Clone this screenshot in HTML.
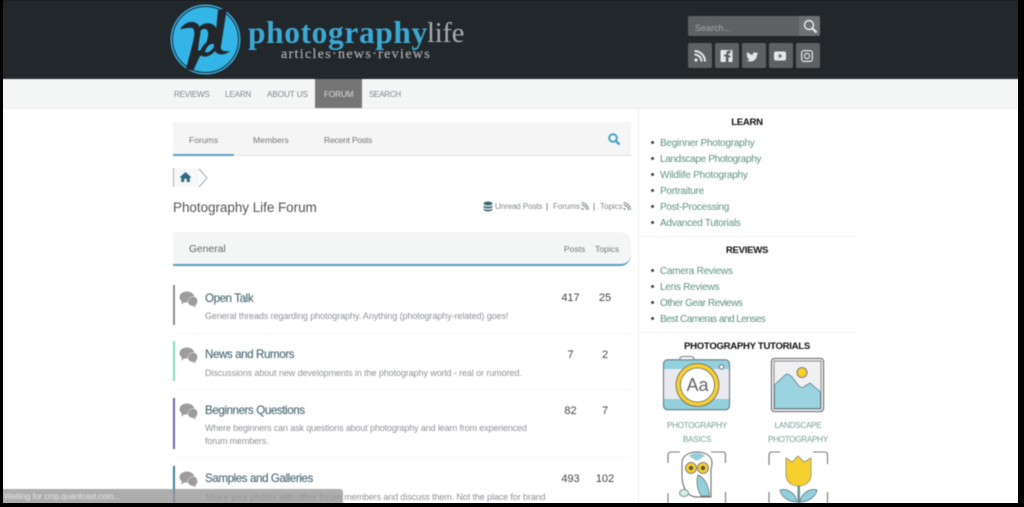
<!DOCTYPE html>
<html><head><meta charset="utf-8"><title>Photography Life Forum</title>
<style>
html,body{margin:0;padding:0;width:1024px;height:507px;overflow:hidden;background:#000}
#p{position:absolute;left:0;top:0;width:1024px;height:507px;overflow:hidden;background:#fff;font-family:"Liberation Sans",sans-serif;filter:blur(.4px)}
#p div,#p svg{position:absolute;white-space:nowrap}
.fr{position:absolute;background:#000}
.nav{font-size:8.2px;color:#84898c;top:89px;line-height:12px;letter-spacing:-.1px}
.tab{font-size:8.6px;color:#777;top:134px;line-height:12px}
.sh{font-size:9.6px;font-weight:bold;color:#111;line-height:14px;text-align:center;letter-spacing:-.3px}
.li{font-size:10px;color:#5f9186;left:660px;line-height:14px;letter-spacing:-.25px}
.bu{width:3px;height:3px;border-radius:50%;background:#444;left:651px}
.ft{font-size:11.6px;color:#4f6d78;left:205px;line-height:15px;letter-spacing:-.42px;-webkit-text-stroke:.15px #4f6d78}
.fd{font-size:9px;color:#8c9295;left:205px;line-height:12.5px;letter-spacing:-.09px}
.n{font-size:11px;color:#444;line-height:14px;text-align:center}
.bar{left:173px;width:2px}
.cap{font-size:8px;color:#6f9d98;line-height:13.5px;text-align:center;letter-spacing:-.18px}
.sq{top:43px;width:24px;height:25px;background:#5e6163;border-radius:2px}
.ur{top:201px;font-size:8px;line-height:12px;color:#7d8a90}
</style></head><body><div id="p">

<div style="left:0;top:0;width:1024px;height:79px;background:#22272b"></div>
<div style="left:0;top:79px;width:1024px;height:30px;background:#f4f5f5;border-bottom:1px solid #ececec;box-sizing:border-box"></div>

<!-- logo -->
<svg style="left:168px;top:2px" width="76" height="76" viewBox="0 0 76 76">
<circle cx="37.500" cy="37.500" r="35" fill="#33b5e8"/>
<circle cx="37.500" cy="37.500" r="33" fill="none" stroke="#22272b" stroke-width="1"/>
<path d="M12 27C16 21 23 18 28 21C30 22 31 23 31 25C37 19 48 20 49 29C50 40 42 52 32 54L25 69L18 67L25 40C27 32 27 27 24 26C20 25 16 27 12 27Z" fill="#22272b"/>
<path d="M33 28C38 25 41 28 40 34C39 41 36 47 30 49L31 40Z" fill="#33b5e8"/>
<path d="M50 8L59 6L53 44C52 48 55 50 62 49C58 53 50 54 47 49C44 53 38 56 34 54C31 52 33 44 38 41C42 38 46 38 47 40Z" fill="#22272b"/>
<path d="M46 42C42 41 38 45 37 50C40 52 44 48 46 45Z" fill="#33b5e8"/>
</svg>
<div style="left:248px;top:13px;font:bold 31.500px/40px 'Liberation Serif',serif;color:#3ba9d3;letter-spacing:.6px">photography</div>
<div style="left:427px;top:14px;font:28.500px/40px 'Liberation Serif',serif;color:#a9adaf;letter-spacing:-.2px">life</div>
<div style="left:281px;top:46px;font:14px/18px 'Liberation Serif',serif;color:#a8acae;letter-spacing:1.330px;-webkit-text-stroke:.2px #a8acae">articles·news·reviews</div>

<!-- nav -->
<div style="left:315px;top:79px;width:47px;height:29px;background:#757575"></div>
<div class="nav" style="left:174px;letter-spacing:-.35px">REVIEWS</div>
<div class="nav" style="left:225px;letter-spacing:-.25px">LEARN</div>
<div class="nav" style="left:267px">ABOUT US</div>
<div class="nav" style="left:324px;color:#ddd">FORUM</div>
<div class="nav" style="left:369px;letter-spacing:-.4px">SEARCH</div>

<!-- search -->
<div style="left:688px;top:16px;width:132px;height:20px;background:#5e6163;border-radius:2px"></div>
<div style="left:799px;top:16px;width:21px;height:20px;background:#6e7173;border-radius:0 2px 2px 0"></div>
<div style="left:695px;top:22px;font-size:9px;line-height:12px;color:#a5a8a9">Search...</div>
<svg style="left:801px;top:17px" width="18" height="18" viewBox="0 0 18 18"><circle cx="8" cy="8" r="4.500" fill="none" stroke="#eee" stroke-width="1.400"/><path d="M11.500 11.500L15.500 15.500" stroke="#eee" stroke-width="2.200"/></svg>

<div class="sq" style="left:688px"></div><div class="sq" style="left:715px"></div><div class="sq" style="left:742px"></div><div class="sq" style="left:769px"></div><div class="sq" style="left:796px"></div>
<svg style="left:688px;top:43px" width="132" height="25" viewBox="0 0 132 25">
<g fill="#e8e8e8">
<circle cx="8" cy="17" r="1.600"/>
<path d="M6.500 10.500a8 8 0 0 1 8 8h-2a6 6 0 0 0-6-6zM6.500 7a11.500 11.500 0 0 1 11.500 11.500h-2a9.500 9.500 0 0 0-9.500-9.500z"/>
<path d="M33.500 7h10a1 1 0 0 1 1 1v10a1 1 0 0 1-1 1h-3v-4.500h1.700l.3-2h-2v-1.200c0-.6.2-1 1-1h1.100V7.600h-1.600c-1.700 0-2.700 1-2.700 2.700v1.200H36v2h1.800V19h-4.300a1 1 0 0 1-1-1V8a1 1 0 0 1 1-1z"/>
<path d="M60 9.500c1.600 1.600 3.200 2.400 4.800 2.500-.4-2 2-3.400 3.500-2 .6 0 1.100-.3 1.600-.5-.2.600-.6 1-1 1.300.5 0 .9-.2 1.300-.3-.3.500-.7.900-1.200 1.200 0 3.700-2.800 6.800-6.800 6.800-1.400 0-2.600-.4-3.700-1.100 1.300.1 2.400-.2 3.400-.9-1.100 0-1.900-.7-2.300-1.600.4.1.7 0 1 0-1.100-.3-1.900-1.200-1.900-2.400.3.200.7.300 1.100.3-1-.7-1.400-2.200-.8-3.300z"/>
<path d="M88 8.500h8a2 2 0 0 1 2 2v5a2 2 0 0 1-2 2h-8a2 2 0 0 1-2-2v-5a2 2 0 0 1 2-2z"/>
</g>
<path d="M90.800 10.800v4.400l3.600-2.200z" fill="#5e6163"/>
<g fill="none" stroke="#e8e8e8" stroke-width="1.200"><rect x="113.600" y="7.600" width="10.800" height="10.800" rx="2.600"/><circle cx="119" cy="13" r="2.600"/></g>
</svg>

<!-- tabs -->
<div style="left:173px;top:122px;width:458px;height:33px;background:#f5f5f5;border-bottom:1px solid #e3e3e3"></div>
<div style="left:173px;top:154px;width:61px;height:2px;background:#5b9fc2"></div>
<div class="tab" style="left:189px">Forums</div>
<div class="tab" style="left:253px">Members</div>
<div class="tab" style="left:324px;letter-spacing:-.25px">Recent Posts</div>
<svg style="left:607px;top:132px" width="14" height="14" viewBox="0 0 14 14"><circle cx="6" cy="6" r="3.800" fill="none" stroke="#45a3c4" stroke-width="2"/><path d="M9 9L12.500 12.500" stroke="#45a3c4" stroke-width="2.400"/></svg>

<!-- breadcrumb -->
<div style="left:173px;top:168px;width:1px;height:19px;background:#a9b3b8"></div>
<div style="left:174px;top:168px;width:25px;height:19px;background:#f5f7f8"></div>
<svg style="left:179px;top:171px" width="13" height="12" viewBox="0 0 13 12"><path d="M6.500 1L12.500 6.500H10.800V11H7.800V7.800H5.200V11H2.200V6.500H.5Z" fill="#2f6a7d"/></svg>
<svg style="left:197px;top:168px" width="12" height="20" viewBox="0 0 12 20"><path d="M2 1L10 10L2 19" fill="none" stroke="#9eabb1" stroke-width="1"/></svg>

<div style="left:173px;top:199px;font-size:13.500px;line-height:17px;color:#555;letter-spacing:-.05px">Photography Life Forum</div>

<svg style="left:483px;top:201px" width="10" height="11" viewBox="0 0 10 11"><g fill="#3f6874"><ellipse cx="5" cy="2.500" rx="4.500" ry="2"/><path d="M.5 4.500c1 1.500 8 1.500 9 0v1.500c-1 2-8 2-9 0zM.5 7.500c1 1.500 8 1.500 9 0v1c-1 2.500-8 2.500-9 0z"/></g></svg>
<div class="ur" style="left:495px;letter-spacing:-.1px">Unread Posts</div>
<div class="ur" style="left:546px;color:#555">|</div>
<div class="ur" style="left:553px">Forums</div>
<div class="ur" style="left:593px;color:#555">|</div>
<div class="ur" style="left:600px">Topics</div>
<svg style="left:581px;top:202px" width="8" height="9" viewBox="0 0 8 9"><path d="M.5 3a5 5 0 0 1 5 5M.5.800a7.200 7.200 0 0 1 7 7.200" fill="none" stroke="#73838a" stroke-width="1"/><circle cx="1.500" cy="7" r="1" fill="#73838a"/></svg>
<svg style="left:623px;top:202px" width="8" height="9" viewBox="0 0 8 9"><path d="M.5 3a5 5 0 0 1 5 5M.5.800a7.200 7.200 0 0 1 7 7.200" fill="none" stroke="#73838a" stroke-width="1"/><circle cx="1.500" cy="7" r="1" fill="#73838a"/></svg>

<!-- General -->
<div style="left:173px;top:232px;width:458px;height:32px;background:#f4f5f5;border-bottom:2px solid #5b9fc2;border-radius:0 10px 10px 0/0 10px 12px 0"></div>
<div style="left:189px;top:243px;font-size:10.300px;line-height:14px;color:#666">General</div>
<div style="left:564px;top:243px;font-size:8.500px;line-height:12px;color:#777">Posts</div>
<div style="left:595px;top:243px;font-size:8.500px;line-height:12px;color:#777">Topics</div>

<!-- rows -->
<div class="bar" style="top:285px;height:40px;background:#8f8f8f"></div>
<div class="bar" style="top:341px;height:40px;background:#7fdcc4"></div>
<div class="bar" style="top:398px;height:51px;background:#6a6aa6"></div>
<div class="bar" style="top:466px;height:37px;background:#3f7f99"></div>
<div style="left:173px;top:333px;width:458px;height:1px;background:#f7f7f7"></div>
<div style="left:173px;top:389px;width:458px;height:1px;background:#f7f7f7"></div>
<div style="left:173px;top:457px;width:458px;height:1px;background:#f7f7f7"></div>

<svg width="0" height="0" style="left:0;top:0"><defs><g id="b"><path d="M8 .5C3.800.5.500 3 .5 6.200c0 1.700 1 3.200 2.500 4.200L2 13.500l3.700-2.100c.7.1 1.500.2 2.300.2 4.200 0 7.500-2.400 7.500-5.400S12.200.5 8 .5z" fill="#9c9c9c"/><path d="M14.500 5.500c-3 0-5.800 2.200-5.800 5 0 2.600 2.400 4.600 5.300 4.600l3 1.700-.5-2.600c1.300-.8 2.100-2.200 2.100-3.700 0-2.800-1.600-5-4.100-5z" fill="#9c9c9c" stroke="#fff" stroke-width=".5"/></g></defs></svg>
<svg style="left:179px;top:291px" width="21" height="18"><use href="#b"/></svg>
<svg style="left:179px;top:347px" width="21" height="18"><use href="#b"/></svg>
<svg style="left:179px;top:403px" width="21" height="18"><use href="#b"/></svg>
<svg style="left:179px;top:471px" width="21" height="18"><use href="#b"/></svg>

<div class="ft" style="top:291px">Open Talk</div>
<div class="fd" style="top:310px">General threads regarding photography. Anything (photography-related) goes!</div>
<div class="ft" style="top:347px">News and Rumors</div>
<div class="fd" style="top:367px">Discussions about new developments in the photography world - real or rumored.</div>
<div class="ft" style="top:403px">Beginners Questions</div>
<div class="fd" style="top:422px;letter-spacing:-.14px">Where beginners can ask questions about photography and learn from experienced<br>forum members.</div>
<div class="ft" style="top:471px">Samples and Galleries</div>
<div class="fd" style="top:491px;letter-spacing:-.11px">Share your photos with other forum members and discuss them. Not the place for brand</div>

<div class="n" style="left:555px;top:291px;width:31px">417</div><div class="n" style="left:590px;top:291px;width:30px">25</div>
<div class="n" style="left:555px;top:348px;width:31px">7</div><div class="n" style="left:590px;top:348px;width:30px">2</div>
<div class="n" style="left:555px;top:404px;width:31px">82</div><div class="n" style="left:590px;top:404px;width:30px">7</div>
<div class="n" style="left:555px;top:472px;width:31px">493</div><div class="n" style="left:590px;top:472px;width:30px">102</div>

<!-- sidebar -->
<div style="left:638px;top:109px;width:1px;height:394px;background:#f0f0f0"></div>
<div style="left:639px;top:236px;width:218px;height:1px;background:#f0f0f0"></div>
<div style="left:639px;top:332px;width:218px;height:1px;background:#f0f0f0"></div>

<div class="sh" style="left:639px;top:116px;width:216px">LEARN</div>
<div class="bu" style="top:141px"></div><div class="li" style="top:137px">Beginner Photography</div>
<div class="bu" style="top:157px"></div><div class="li" style="top:153px;letter-spacing:-.35px">Landscape Photography</div>
<div class="bu" style="top:173px"></div><div class="li" style="top:169px;letter-spacing:-.2px">Wildlife Photography</div>
<div class="bu" style="top:189px"></div><div class="li" style="top:185px">Portraiture</div>
<div class="bu" style="top:205px"></div><div class="li" style="top:201px">Post-Processing</div>
<div class="bu" style="top:221px"></div><div class="li" style="top:217px">Advanced Tutorials</div>

<div class="sh" style="left:639px;top:244px;width:216px">REVIEWS</div>
<div class="bu" style="top:269px"></div><div class="li" style="top:265px">Camera Reviews</div>
<div class="bu" style="top:285px"></div><div class="li" style="top:281px">Lens Reviews</div>
<div class="bu" style="top:301px"></div><div class="li" style="top:297px;letter-spacing:-.45px">Other Gear Reviews</div>
<div class="bu" style="top:317px"></div><div class="li" style="top:313px;letter-spacing:-.55px">Best Cameras and Lenses</div>

<div class="sh" style="left:639px;top:340px;width:216px">PHOTOGRAPHY TUTORIALS</div>

<!-- camera -->
<svg style="left:660px;top:355px" width="72" height="60" viewBox="0 0 72 60">
<path d="M20 5V3.500Q20 1.500 23 1.500H31Q34 1.500 34 5" fill="#fff" stroke="#6f7f87" stroke-width="1"/>
<rect x="3.500" y="4.800" width="66" height="50" rx="4" fill="#94cfdc" stroke="#5e737c" stroke-width="1"/>
<rect x="4" y="14" width="65" height="30" fill="#e9e9ef"/>
<circle cx="37.500" cy="30" r="21.500" fill="#f6d02f" stroke="#666" stroke-width=".8"/>
<circle cx="37.500" cy="30" r="17" fill="#fff" stroke="#666" stroke-width=".8"/>
<text x="37.500" y="36" font-family="Liberation Sans,sans-serif" font-size="18" fill="#666" text-anchor="middle">Aa</text>
<circle cx="61.500" cy="12" r="2.200" fill="#fff" stroke="#5e737c" stroke-width="1"/>
</svg>
<!-- landscape -->
<svg style="left:769px;top:356px" width="58" height="60" viewBox="0 0 58 60">
<rect x="2.500" y="2.500" width="52" height="53" rx="3" fill="#fff" stroke="#777" stroke-width="1.300"/>
<rect x="5" y="5" width="47" height="48" fill="#f1f1f4" stroke="#666" stroke-width=".8"/>
<path d="M5.500 29L15 20C18 17 20 18 23 21L30 30Q33 33 36 30L41 27L51.500 36V52.500H5.500Z" fill="#9bd3e0" stroke="#5e7a84" stroke-width=".8"/>
<circle cx="33" cy="16.500" r="5" fill="#f6d02f" stroke="#666" stroke-width=".8"/>
</svg>

<div class="cap" style="left:647px;top:419px;width:100px">PHOTOGRAPHY<br>BASICS</div>
<div class="cap" style="left:748px;top:419px;width:100px">LANDSCAPE<br>PHOTOGRAPHY</div>

<!-- owl -->
<svg style="left:665px;top:451px" width="64" height="52" viewBox="0 0 64 52">
<path d="M3 12V4Q3 1 6 1H15M46 1H58Q60.500 1 60.500 4V12M60.500 41V52M3 42V52" fill="none" stroke="#777" stroke-width="1.100"/>
<path d="M17 12C17 4 25 1 32 1C39 1 47 4 47 12C47 14 46 17 46 20V46H32C22 46 17 36 17 24Z" fill="#fff" stroke="#666" stroke-width="1"/>
<path d="M24 5C28 1 36 1 40 5L32 10Z" fill="#94cfdc"/>
<path d="M33 24C40 27 44 35 44.500 45H36C32 38 31 30 33 24Z" fill="#94cfdc" stroke="#666" stroke-width=".7"/>
<circle cx="26" cy="17" r="5.500" fill="#f6d02f" stroke="#666" stroke-width=".8"/><circle cx="38" cy="17" r="5.500" fill="#f6d02f" stroke="#666" stroke-width=".8"/>
<circle cx="26" cy="17" r="2.200" fill="#555"/><circle cx="38" cy="17" r="2.200" fill="#555"/>
<ellipse cx="19" cy="42" rx="4.500" ry="3.500" fill="#d8ece4" stroke="#5e7a84" stroke-width=".8"/>
</svg>
<!-- tulip -->
<svg style="left:767px;top:451px" width="64" height="52" viewBox="0 0 64 52">
<path d="M2 14V4Q2 1 5 1H13M46 1H58Q60.500 1 60.500 4V13M2 41V52M60.500 41V52" fill="none" stroke="#777" stroke-width="1.100"/>
<path d="M19 7L25 11L31 5L37 11L44 7V24C44 31 38 35 31.500 35C25 35 19 31 19 24Z" fill="#f6d02f" stroke="#8a8a70" stroke-width=".8"/>
<path d="M30.500 35H33V52H30.500Z" fill="#6c8f95"/>
<path d="M30 51C22 51 14 46 13 39C21 37 29 43 30 51ZM33 51C41 51 49 46 50 39C42 37 34 43 33 51Z" fill="#94cfdc" stroke="#5e7a84" stroke-width=".8"/>
</svg>

<!-- status bar -->
<div style="left:0;top:489px;width:343px;height:18px;background:rgba(150,150,150,.78);border-radius:0 3px 0 0"></div>
<div style="left:4px;top:491px;font-size:8px;line-height:11px;color:#e4e4e4">Waiting for cmp.quantcast.com...</div>
</div>
<!-- black frame, kept sharp outside the softened page -->
<div class="fr" style="left:0;top:0;width:3px;height:507px"></div>
<div class="fr" style="left:1018px;top:0;width:6px;height:507px"></div>
<div class="fr" style="left:0;top:503px;width:1024px;height:4px"></div>
</body></html>
